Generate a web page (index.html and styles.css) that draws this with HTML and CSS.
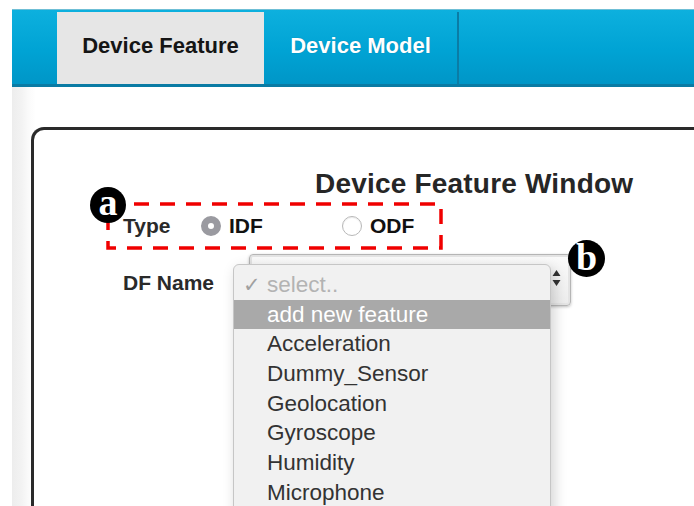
FILE: index.html
```html
<!DOCTYPE html>
<html lang="en">
<head>
<meta charset="utf-8">
<title>Device Feature</title>
<link rel="stylesheet" href="styles.css">
</head>
<body>
<div class="page">
  <nav class="navbar">
    <div class="tab tab-active">Device Feature</div>
    <div class="tab tab-model">Device Model</div>
  </nav>

  <main class="main">
    <section class="card">
      <h1 class="card-title">Device Feature Window</h1>

      <div class="row row-type">
        <span class="label label-type">Type</span>
        <span class="radio radio-on"></span>
        <span class="radio-text radio-text-idf">IDF</span>
        <span class="radio"></span>
        <span class="radio-text">ODF</span>
      </div>

      <div class="row row-name">
        <span class="label label-name">DF Name</span>
        <div class="select">
          <span class="select-arrows">
            <svg width="9" height="18" viewBox="0 0 9 18"><path d="M4.5 1 L8.5 7 L0.5 7 Z M4.5 17 L8.5 11 L0.5 11 Z" fill="#333"/></svg>
          </span>
        </div>
      </div>

      <!-- open dropdown list of the DF Name select -->
      <ul class="menu">
        <li class="opt opt-placeholder"><span class="check">✓</span>select..</li>
        <li class="opt opt-hover">add new feature</li>
        <li class="opt">Acceleration</li>
        <li class="opt">Dummy_Sensor</li>
        <li class="opt">Geolocation</li>
        <li class="opt">Gyroscope</li>
        <li class="opt">Humidity</li>
        <li class="opt">Microphone</li>
      </ul>

      <!-- callouts -->
      <svg class="dash-box" width="337" height="48" viewBox="0 0 337 48">
        <rect x="2" y="2" width="333" height="44" fill="none" stroke="#f00000" stroke-width="3.5" stroke-dasharray="15 11"/>
      </svg>
      <span class="badge badge-a">a</span>
      <span class="badge badge-b">b</span>
    </section>
  </main>
</div>
</body>
</html>
```

FILE: styles.css
```css
html, body {
  margin: 0;
  padding: 0;
  width: 694px;
  height: 506px;
  overflow: hidden;
  background: #ffffff;
  font-family: "Liberation Sans", Arial, sans-serif;
}

.page {
  padding: 9px 0 0 12px;
}

/* top navigation */
.navbar {
  box-sizing: border-box;
  height: 78px;
  display: flex;
  padding: 2px 0 0 45px;
  background: linear-gradient(#0db0de, #00a3d4 55%, #0096c7);
  border-top: 1px solid #6fbfd6;
  border-bottom: 3px solid #0a7ba4;
}

.tab {
  box-sizing: border-box;
  display: flex;
  align-items: center;
  justify-content: center;
  padding-bottom: 4px;
  font-size: 22px;
  font-weight: bold;
}

.tab-active {
  width: 207px;
  background: #e6e6e6;
  color: #151515;
}

.tab-model {
  width: 195px;
  color: #ffffff;
  border-right: 2px solid #0b7ca5;
  text-shadow: 0 0 1px rgba(0, 60, 90, 0.4);
}

/* content area */
.main {
  height: 419px;
  box-sizing: border-box;
  padding: 40px 0 0 19px;
  background: linear-gradient(to right, #ededed 0, #f3f3f3 10px, #fafafa 16px, #ffffff 24px);
}

.card {
  position: relative;
  box-sizing: border-box;
  height: 379px;
  overflow: hidden;
  background: #ffffff;
  border-top: 3px solid #2a2a2a;
  border-left: 3px solid #2a2a2a;
  border-top-left-radius: 13px;
  padding-top: 38px;
}

.card-title {
  margin: 0 0 11px 281px;
  font-size: 28px;
  line-height: 32px;
  font-weight: bold;
  color: #262626;
  white-space: nowrap;
  letter-spacing: 0.2px;
}

.row {
  display: flex;
  align-items: center;
  padding-left: 89px;
}

.label {
  font-size: 21px;
  font-weight: bold;
  color: #2a2a2a;
}

.row-type {
  height: 30px;
}

.label-type {
  width: 78px;
}

.radio {
  box-sizing: border-box;
  width: 20px;
  height: 20px;
  border-radius: 50%;
  border: 1px solid #b8b8b8;
  background: #fff;
  box-shadow: inset 0 1px 1px rgba(0, 0, 0, 0.08);
}

.radio-on {
  border: 7px solid #9a9aa0;
  background: #ffffff;
  box-shadow: none;
}

.radio-text {
  margin-left: 8px;
  font-size: 21px;
  font-weight: bold;
  color: #111;
}

.radio-text-idf {
  width: 113px;
}

.row-name {
  margin-top: 12px;
  height: 54px;
}

.label-name {
  width: 126px;
  padding-top: 6px;
}

.select {
  box-sizing: border-box;
  width: 322px;
  height: 52px;
  display: flex;
  align-items: center;
  justify-content: flex-end;
  padding-right: 9px;
  border: 1px solid #b5b5b5;
  border-radius: 4px;
  background: linear-gradient(#fbfbfb, #ececec);
  box-shadow: 0 1px 3px rgba(0, 0, 0, 0.25), inset 0 0 0 2px #e4e4e4;
}

.select-arrows {
  display: flex;
  margin-top: -4px;
}

/* open dropdown */
.menu {
  position: absolute;
  left: 199px;
  top: 134px;
  width: 318px;
  box-sizing: border-box;
  margin: 0;
  padding: 5px 0 0;
  list-style: none;
  background: #f1f1f1;
  border: 1px solid #c6c6c6;
  border-radius: 6px;
  box-shadow: 3px 4px 14px rgba(0, 0, 0, 0.18);
  height: 300px;
}

.opt {
  height: 29.7px;
  line-height: 29.7px;
  padding-left: 33px;
  font-size: 22.5px;
  color: #333333;
  white-space: nowrap;
}

.opt-placeholder {
  color: #b3b3b3;
}

.check {
  display: inline-block;
  width: 24px;
  margin-left: -24px;
  font-size: 21px;
  color: #a0a0a0;
}

.opt-hover {
  background: #a9a9a9;
  color: #ffffff;
}

/* annotations */
.dash-box {
  position: absolute;
  left: 72px;
  top: 72px;
}

.badge {
  position: absolute;
  width: 36px;
  height: 36px;
  border-radius: 50%;
  background: #000;
  color: #fff;
  font-family: "Liberation Serif", "Times New Roman", serif;
  font-weight: bold;
  font-size: 38px;
  line-height: 30px;
  text-align: center;
}

.badge-a {
  left: 56px;
  top: 57px;
}

.badge-b {
  left: 534px;
  top: 110px;
  width: 37px;
  height: 37px;
  line-height: 34px;
}
```
